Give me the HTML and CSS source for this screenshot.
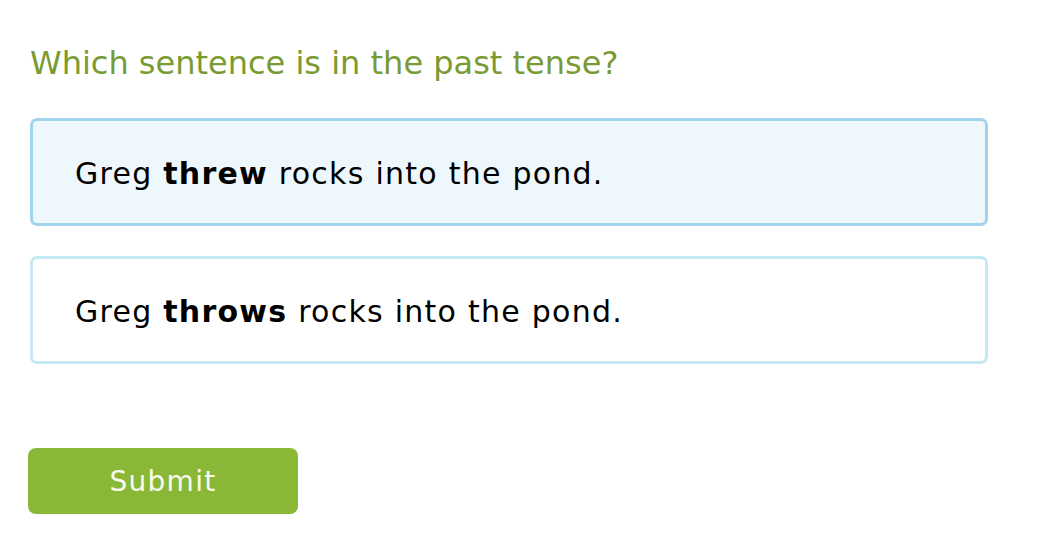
FILE: index.html
```html
<!DOCTYPE html>
<html>
<head>
<meta charset="utf-8">
<link rel="stylesheet" href="styles.css">
</head>
<body>
<div class="page">
  <h1 class="question">Which sentence is in the past tense?</h1>
  <div class="choices">
    <div class="choice selected"><span class="sentence">Greg <b>threw</b> rocks into the pond.</span></div>
    <div class="choice"><span class="sentence">Greg <b>throws</b> rocks into the pond.</span></div>
  </div>
  <button class="submit">Submit</button>
</div>
</body>
</html>
```
FILE: styles.css
```css
html, body {
  margin: 0;
  padding: 0;
  background: #ffffff;
}
.page {
  font-family: "DejaVu Sans", Verdana, sans-serif;
  padding: 42px 70px 0 30px;
  display: flex;
  flex-direction: column;
  align-items: flex-start;
}
.question {
  margin: 0;
  font-weight: normal;
  font-size: 32px;
  line-height: 42px;
  color: #7a9a34;
}
.choices {
  margin-top: 34px;
  display: flex;
  flex-direction: column;
  gap: 30px;
  align-self: stretch;
}
.choice {
  height: 108px;
  box-sizing: border-box;
  border: 3px solid #c5e8f5;
  border-radius: 7px;
  background: #fff;
  display: flex;
  align-items: center;
  padding: 2px 0 0 42px;
  font-size: 30px;
  letter-spacing: 1.25px;
  color: #000;
}
.choice b { font-weight: bold; }
.choice.selected {
  border-color: #a0d4ee;
  background: #eef8fc;
}
.submit {
  margin-top: 84px;
  margin-left: -2px;
  width: 270px;
  height: 66px;
  border: none;
  border-radius: 8px;
  background: #8ab836;
  color: #f7faee;
  font-family: "DejaVu Sans", Verdana, sans-serif;
  font-size: 28px;
  letter-spacing: 1.3px;
  padding: 0;
}
```
